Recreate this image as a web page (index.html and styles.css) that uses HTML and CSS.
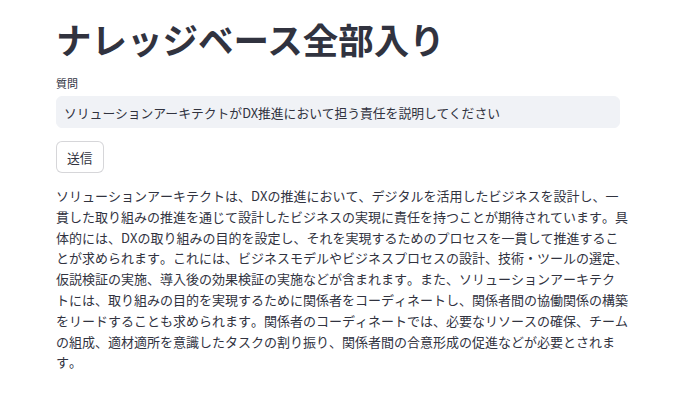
FILE: index.html
```html
<!DOCTYPE html>
<html lang="ja">
<head>
    <meta charset="UTF-8">
    <meta name="viewport" content="width=device-width, initial-scale=1.0">
    <title>ナレッジベース全部入り</title>
    <link rel="stylesheet" href="styles.css">
</head>
<body>
    <div class="main">
        <h1 class="title">ナレッジベース全部入り</h1>
        <div class="field">
            <label class="field-label" for="question">質問</label>
            <input class="field-input" id="question" type="text" value="ソリューションアーキテクトがDX推進において担う責任を説明してください">
        </div>
        <button class="send-btn">送信</button>
        <p class="answer">ソリューションアーキテクトは、DXの推進において、デジタルを活用したビジネスを設計し、一貫した取り組みの推進を通じて設計したビジネスの実現に責任を持つことが期待されています。具体的には、DXの取り組みの目的を設定し、それを実現するためのプロセスを一貫して推進することが求められます。これには、ビジネスモデルやビジネスプロセスの設計、技術・ツールの選定、仮説検証の実施、導入後の効果検証の実施などが含まれます。また、ソリューションアーキテク<br>トには、取り組みの目的を実現するために関係者をコーディネートし、関係者間の協働関係の構築をリードすることも求められます。関係者のコーディネートでは、必要なリソースの確保、チームの組成、適材適所を意識したタスクの割り振り、関係者間の合意形成の促進などが必要とされます。</p>
    </div>
</body>
</html>
```

FILE: styles.css
```css
body{
    margin: 0;
    background: #fff;
    color: #31333f;
    font-family: "Noto Sans CJK JP", "Noto Sans", sans-serif;
}
.main{
    width: 564px;
    margin: 0 0 0 56px;
    padding-top: 14px;
}
.title{
    margin: 0;
    font-size: 35.5px;
    font-weight: 700;
    line-height: 50px;
}
.field{
    margin-top: 12px;
}
.field-label{
    display: block;
    font-size: 11px;
    line-height: 14px;
    margin-bottom: 6px;
}
.field-input{
    display: block;
    box-sizing: border-box;
    width: 100%;
    height: 32px;
    padding: 0 7px;
    border: 1px solid #f0f2f6;
    border-radius: 6px;
    background: #f0f2f6;
    color: #31333f;
    font-family: inherit;
    font-size: 12.8px;
    outline: none;
}
.send-btn{
    display: block;
    margin-top: 13px;
    height: 32px;
    padding: 0 10px;
    border: 1px solid rgba(49,51,63,0.2);
    border-radius: 6px;
    background: #fff;
    color: #31333f;
    font-family: inherit;
    font-size: 12.8px;
}
/* answer text: 13px, 44 full-width chars a line, no kana kerning */
.answer{
    width: 573px;
    margin: 13px 0 0;
    font-size: 13px;
    line-height: 20.8px;
    font-kerning: none;
    text-spacing-trim: space-all;
}
```
